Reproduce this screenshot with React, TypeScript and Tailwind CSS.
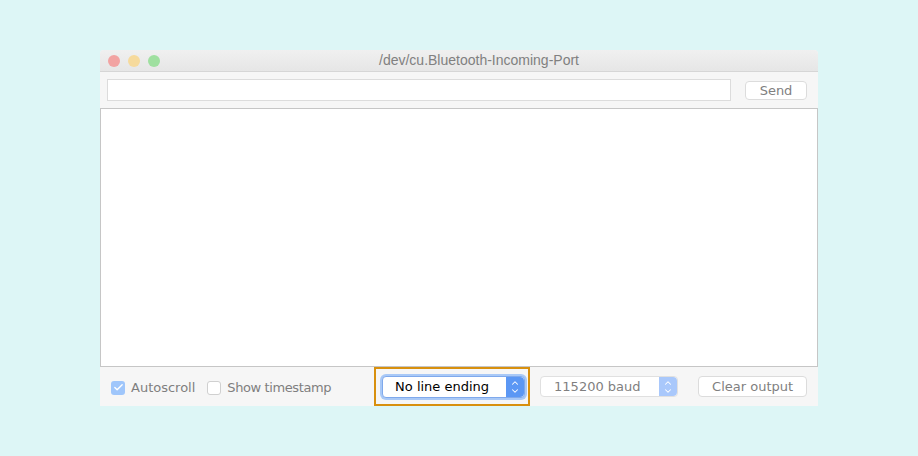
import { Check, ChevronDown, ChevronUp } from 'lucide-react';

function Stepper({ active }: { active: boolean }) {
  return (
    <div
      className={`w-[18px] self-stretch flex flex-col items-center justify-center rounded-r-[4px] ${active ? 'bg-[#5b97f4]' : 'bg-[#a9c8fb]'}`}
    >
      <ChevronUp size={10} strokeWidth={2.5} className="text-white -mb-[1px]" />
      <ChevronDown size={10} strokeWidth={2.5} className="text-white -mt-[1px]" />
    </div>
  );
}

function App() {
  return (
    <div className="w-[918px] h-[456px] bg-[#ddf6f6] pt-[50px] pl-[100px] font-['DejaVu_Sans',sans-serif]">
      <div className="w-[718px] h-[356px] flex flex-col bg-[#f6f6f6] rounded-t-[4px] overflow-hidden">
        <div className="h-[22px] relative flex items-center bg-gradient-to-b from-[#f0f0f0] to-[#e6e6e6] border-b border-[#d6d6d6]">
          <div className="flex items-center gap-[8px] pl-[8px]">
            <span className="w-[12px] h-[12px] rounded-full bg-[#f2a3a2]" />
            <span className="w-[12px] h-[12px] rounded-full bg-[#f6da9c]" />
            <span className="w-[12px] h-[12px] rounded-full bg-[#9fe0a0]" />
          </div>
          <div className="absolute inset-0 pl-[40px] flex items-center justify-center text-[14px] text-[#808080] font-['Liberation_Sans',sans-serif]">
            /dev/cu.Bluetooth-Incoming-Port
          </div>
        </div>
        <div className="h-[36px] flex items-center pl-[7px] pr-[10px] gap-[14px]">
          <div className="w-[624px] h-[22px] bg-white border border-[#dcdcdc]" />
          <button className="w-[62px] h-[19px] bg-white border border-[#dcdcdc] rounded-[4px] text-[13px] text-[#808080] leading-none">
            Send
          </button>
        </div>
        <div className="h-[259px] bg-white border border-[#c6c6c6]" />
        <div className="flex-1 flex items-center text-[13px] text-[#7f7f7f]">
          <div className="flex items-center pl-[11px] pt-[2px]">
            <span className="w-[14px] h-[14px] rounded-[3px] bg-[#9fc6fb] flex items-center justify-center">
              <Check size={11} strokeWidth={3} className="text-white" />
            </span>
            <span className="ml-[6px]">Autoscroll</span>
            <span className="ml-[12px] w-[14px] h-[14px] rounded-[3px] bg-white border border-[#d0d0d0]" />
            <span className="ml-[6px] tracking-[-0.4px]">Show timestamp</span>
          </div>
          <div className="ml-[43px] w-[156px] h-[39px] border-2 border-[#d8900e] flex items-center pl-[6px]">
            <div className="w-[143px] h-[22px] bg-white rounded-[4px] flex items-center shadow-[0_0_0_2px_#a9c9f7] border border-[#7fa9ec]">
              <span className="flex-1 pl-[12px] text-black">No line ending</span>
              <Stepper active />
            </div>
          </div>
          <div className="ml-[10px] w-[138px] h-[21px] bg-white rounded-[4px] border border-[#e0e0e0] flex items-center">
            <span className="flex-1 pl-[13px]">115200 baud</span>
            <Stepper active={false} />
          </div>
          <button className="ml-[20px] w-[109px] h-[21px] bg-white border border-[#dcdcdc] rounded-[4px] text-[13px] text-[#7f7f7f] leading-none">
            Clear output
          </button>
        </div>
      </div>
    </div>
  );
}

export default App;
